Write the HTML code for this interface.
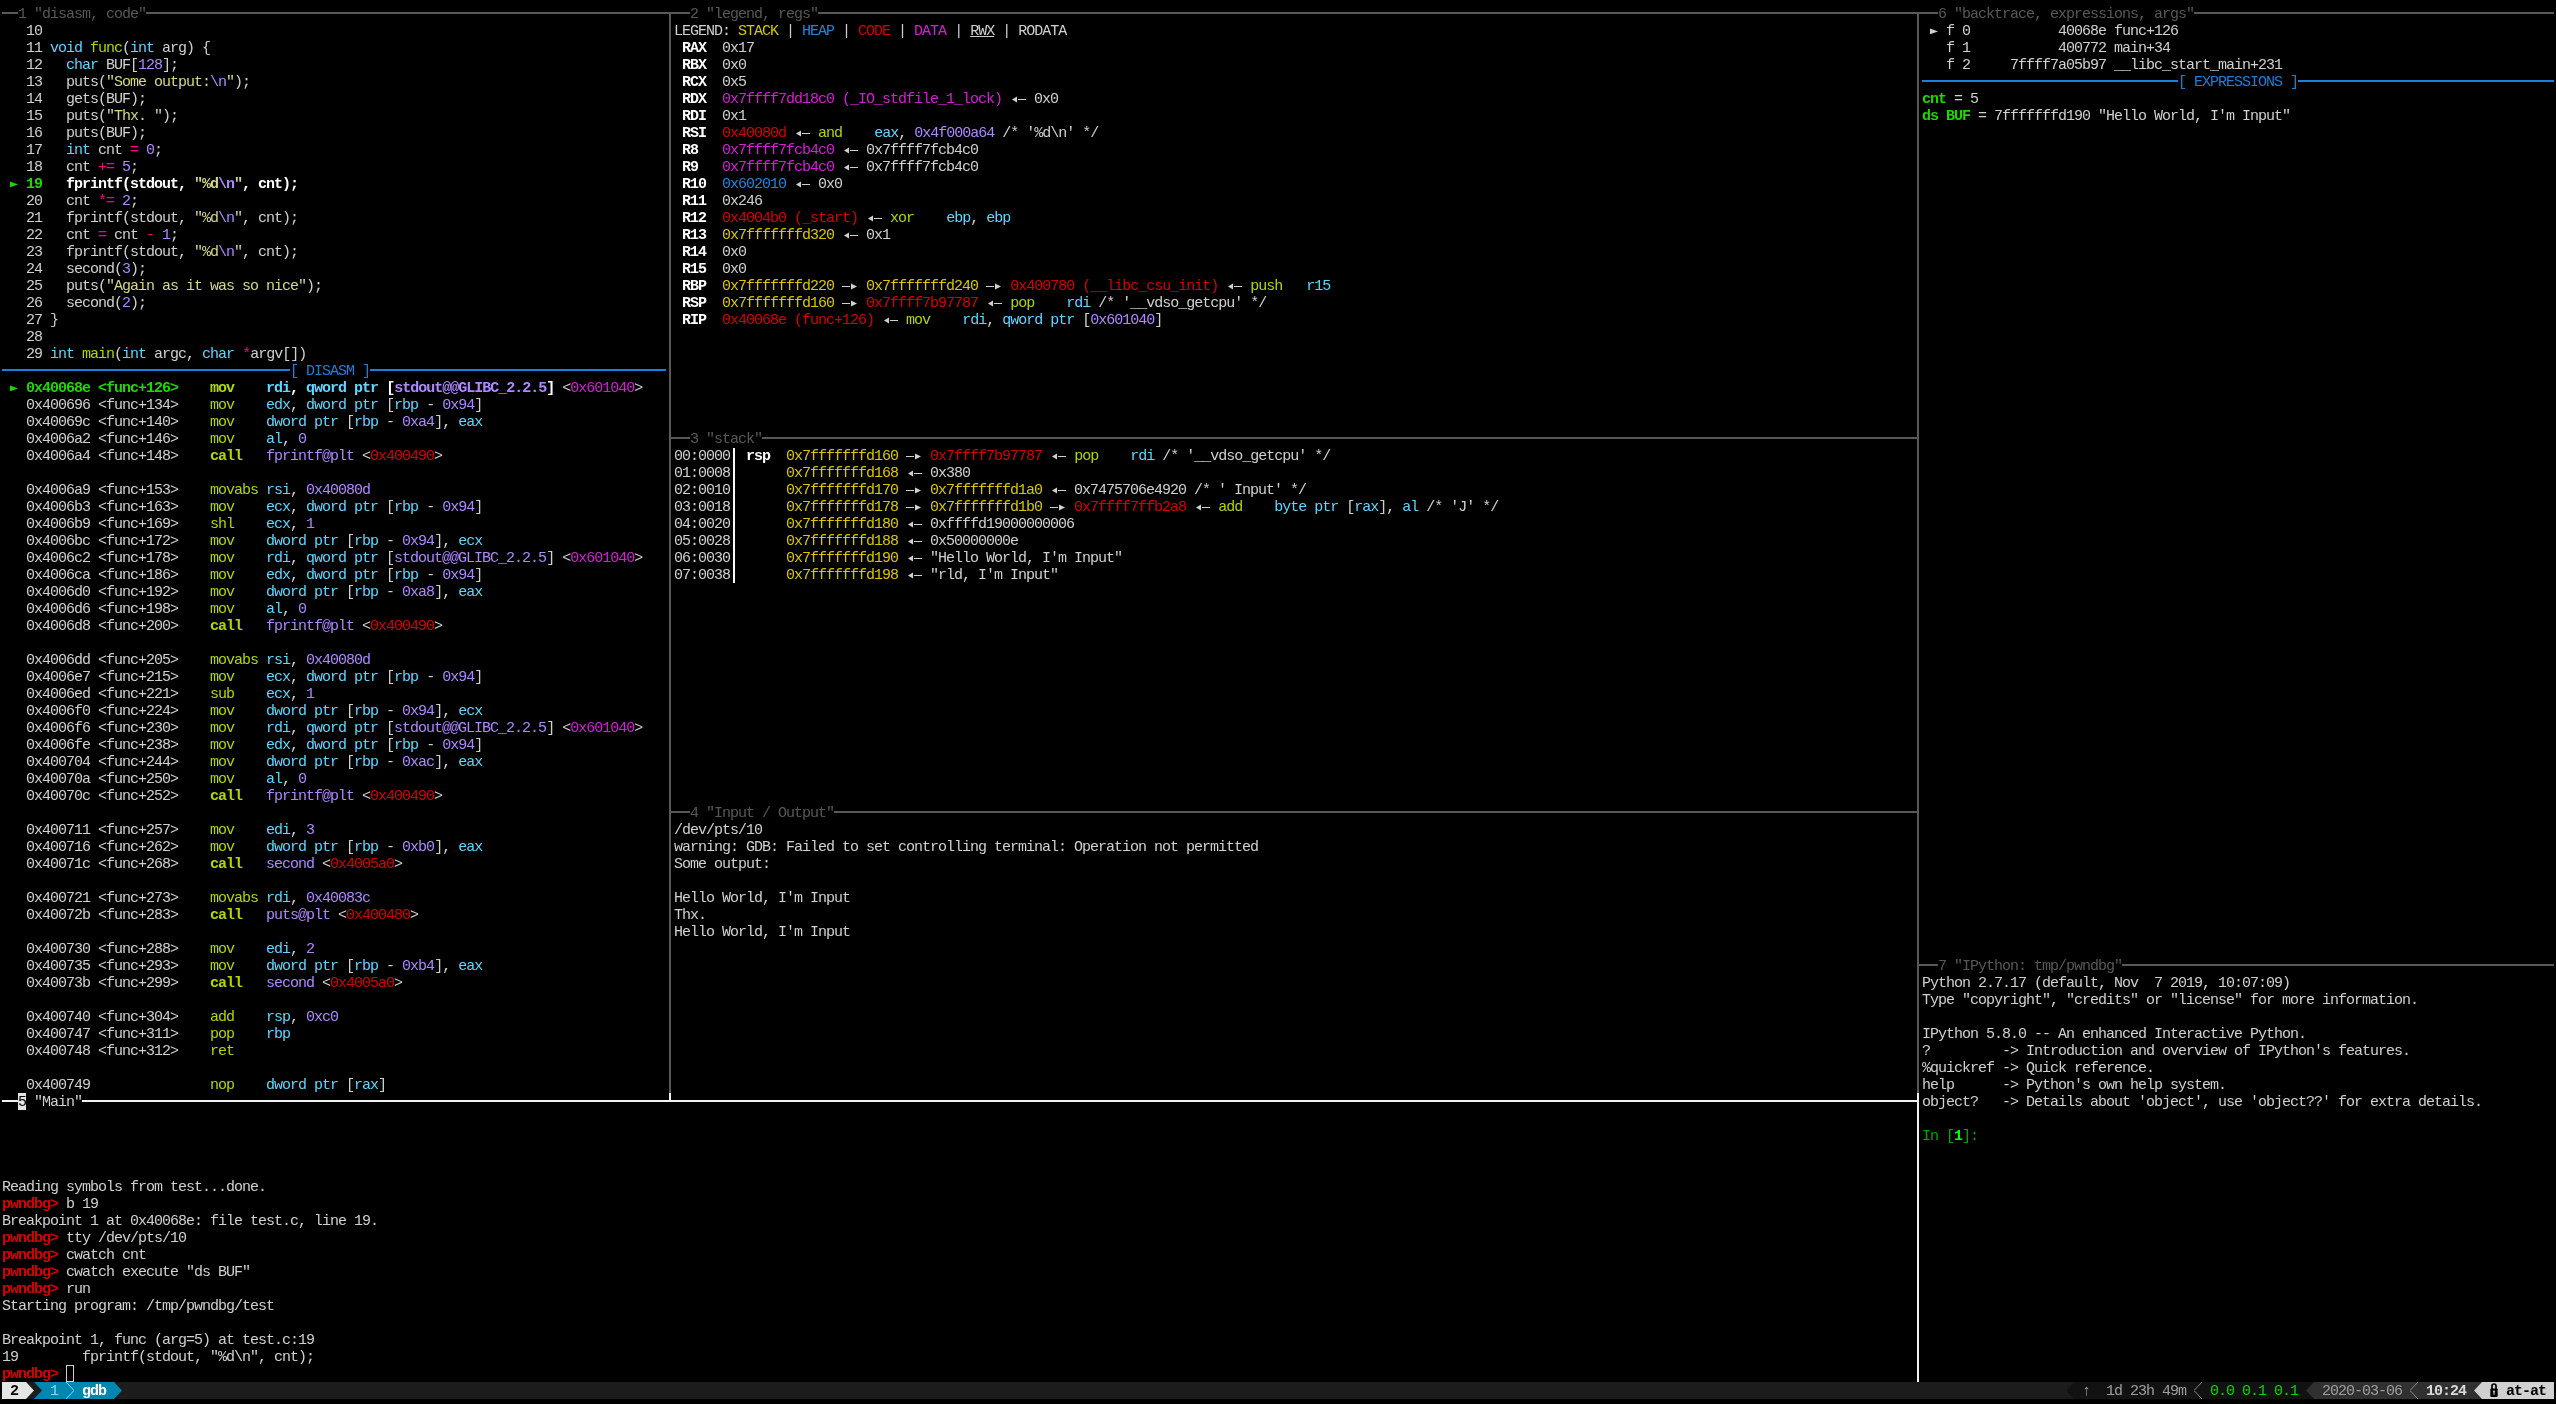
<!DOCTYPE html><html><head><meta charset="utf-8"><style>

html,body{margin:0;padding:0;background:#000;}
body{width:2556px;height:1404px;position:relative;overflow:hidden;}
#scr{position:absolute;left:0;top:0;width:2556px;height:1404px;will-change:transform;}
.r{position:absolute;white-space:pre;font-family:"Liberation Mono",monospace;font-size:15px;line-height:17px;height:17px;letter-spacing:-1.00146px;color:#d0d0d0;}
.ln{position:absolute;box-sizing:content-box;}
.ic{vertical-align:top;display:inline-block;}
.b{font-weight:bold;}
.d{color:#d0d0d0}
.W{color:#ffffff}
.G{color:#1fd600}
.gr{color:#585858}
.cy{color:#5fd7ff}
.yg{color:#afd700}
.pu{color:#af87ff}
.yl{color:#d7d787}
.pk{color:#ff0087}
.mg{color:#d71ed7}
.rd{color:#d70000}
.st{color:#d7c800}
.hp{color:#1f87df}
.bl{color:#1c7fd9}
.ipg{color:#00a800}
.ipG{color:#00ff00}
.prompt{color:#d70000}
.u{text-decoration:underline;}
.bgk{background:#000;}
.inv{background:#e4e4e4;color:#000;}
.k{color:#000}
.sb1{color:#87d7ff}
.sbg{color:#9e9e9e}
.lg{color:#00d700}
.tm{color:#dadada}

</style></head><body><div id="scr">
<div class="ln" style="left:2px;top:12px;width:2552px;height:2px;background:#585858"></div>
<div class="ln" style="left:669px;top:12px;width:2px;height:1081px;background:#585858"></div>
<div class="ln" style="left:669px;top:1093px;width:2px;height:9px;background:#f2f2f2"></div>
<div class="ln" style="left:1917px;top:12px;width:2px;height:1081px;background:#585858"></div>
<div class="ln" style="left:1917px;top:1093px;width:2px;height:289px;background:#f2f2f2"></div>
<div class="ln" style="left:669px;top:437px;width:1250px;height:2px;background:#585858"></div>
<div class="ln" style="left:669px;top:811px;width:1250px;height:2px;background:#585858"></div>
<div class="ln" style="left:1917px;top:964px;width:637px;height:2px;background:#585858"></div>
<div class="ln" style="left:2px;top:1100px;width:1917px;height:2px;background:#f2f2f2"></div>
<div class="ln" style="left:18px;top:1093px;width:8px;height:17px;background:#e4e4e4"></div>
<div class="ln" style="left:26px;top:1093px;width:56px;height:17px;background:#000"></div>
<div class="ln" style="left:2px;top:369px;width:664px;height:2px;background:#1c7fd9"></div>
<div class="ln" style="left:1922px;top:80px;width:632px;height:2px;background:#1c7fd9"></div>
<div class="ln" style="left:733px;top:447px;width:2px;height:136px;background:#ffffff"></div>
<div class="ln" style="left:66px;top:1365px;width:6px;height:15px;border:1px solid #d0d0d0"></div>
<div class="ln" style="left:2px;top:1382px;width:2552px;height:17px;background:#1c1c1c"></div>
<div class="ln" style="left:2px;top:1382px;width:24px;height:17px;background:#e4e4e4"></div>
<svg class="ln" style="left:26px;top:1382px" width="8" height="17"><polygon points="0,0 8,8.5 0,17" fill="#e4e4e4"/></svg>
<div class="ln" style="left:34px;top:1382px;width:80px;height:17px;background:#0087af"></div>
<svg class="ln" style="left:34px;top:1382px" width="8" height="17"><polygon points="0,0 8,8.5 0,17" fill="#1c1c1c"/></svg>
<svg class="ln" style="left:66px;top:1382px" width="8" height="17"><polyline points="0,0 8,8.5 0,17" fill="none" stroke="#87d7ff" stroke-width="1"/></svg>
<svg class="ln" style="left:114px;top:1382px" width="8" height="17"><polygon points="0,0 8,8.5 0,17" fill="#0087af"/></svg>
<div class="ln" style="left:2074px;top:1382px;width:240px;height:17px;background:#121212"></div>
<svg class="ln" style="left:2066px;top:1382px" width="8" height="17"><polygon points="8,0 0,8.5 8,17" fill="#121212"/></svg>
<div class="ln" style="left:2314px;top:1382px;width:168px;height:17px;background:#303030"></div>
<svg class="ln" style="left:2306px;top:1382px" width="8" height="17"><polygon points="8,0 0,8.5 8,17" fill="#303030"/></svg>
<div class="ln" style="left:2482px;top:1382px;width:72px;height:17px;background:#d0d0d0"></div>
<svg class="ln" style="left:2474px;top:1382px" width="8" height="17"><polygon points="8,0 0,8.5 8,17" fill="#d0d0d0"/></svg>
<svg class="ln" style="left:2194px;top:1382px" width="8" height="17"><polyline points="8,0 0,8.5 8,17" fill="none" stroke="#8a8a8a" stroke-width="1"/></svg>
<svg class="ln" style="left:2410px;top:1382px" width="8" height="17"><polyline points="8,0 0,8.5 8,17" fill="none" stroke="#8a8a8a" stroke-width="1"/></svg>
<svg class="ln" style="left:2490px;top:1382px" width="8" height="17"><path d="M2 7.5V4A2 2 0 0 1 6 4V7.5" fill="none" stroke="#000" stroke-width="1.7"/><rect x="0.3" y="6.5" width="7.4" height="8.5" rx="1" fill="#000"/><circle cx="4" cy="9.6" r="1" fill="#d0d0d0"/><rect x="3.5" y="9.6" width="1" height="3.2" fill="#d0d0d0"/></svg>
<div class="r" style="top:23px;left:2px">   10</div>
<div class="r" style="top:40px;left:2px">   11 <span class="cy">void</span> <span class="yg">func</span>(<span class="cy">int</span> arg) {</div>
<div class="r" style="top:57px;left:2px">   12   <span class="cy">char</span> BUF[<span class="pu">128</span>];</div>
<div class="r" style="top:74px;left:2px">   13   puts(<span class="yl">&quot;Some output:</span><span class="pu">\n</span><span class="yl">&quot;</span>);</div>
<div class="r" style="top:91px;left:2px">   14   gets(BUF);</div>
<div class="r" style="top:108px;left:2px">   15   puts(<span class="yl">&quot;Thx. &quot;</span>);</div>
<div class="r" style="top:125px;left:2px">   16   puts(BUF);</div>
<div class="r" style="top:142px;left:2px">   17   <span class="cy">int</span> cnt <span class="pk">=</span> <span class="pu">0</span>;</div>
<div class="r" style="top:159px;left:2px">   18   cnt <span class="pk">+=</span> <span class="pu">5</span>;</div>
<div class="r" style="top:176px;left:2px"> <span class="G b"><svg class="ic" width="8" height="17" viewBox="0 0 8 17"><path d="M0 5.6L8 8.4L0 11.2Z" fill="#1fd600"/></svg> 19</span>   <span class="W b">fprintf(stdout, </span><span class="yl b">&quot;%d</span><span class="pu b">\n</span><span class="yl b">&quot;</span><span class="W b">, cnt);</span></div>
<div class="r" style="top:193px;left:2px">   20   cnt <span class="pk">*=</span> <span class="pu">2</span>;</div>
<div class="r" style="top:210px;left:2px">   21   fprintf(stdout, <span class="yl">&quot;%d</span><span class="pu">\n</span><span class="yl">&quot;</span>, cnt);</div>
<div class="r" style="top:227px;left:2px">   22   cnt <span class="pk">=</span> cnt <span class="pk">-</span> <span class="pu">1</span>;</div>
<div class="r" style="top:244px;left:2px">   23   fprintf(stdout, <span class="yl">&quot;%d</span><span class="pu">\n</span><span class="yl">&quot;</span>, cnt);</div>
<div class="r" style="top:261px;left:2px">   24   second(<span class="pu">3</span>);</div>
<div class="r" style="top:278px;left:2px">   25   puts(<span class="yl">&quot;Again as it was so nice&quot;</span>);</div>
<div class="r" style="top:295px;left:2px">   26   second(<span class="pu">2</span>);</div>
<div class="r" style="top:312px;left:2px">   27 }</div>
<div class="r" style="top:329px;left:2px">   28</div>
<div class="r" style="top:346px;left:2px">   29 <span class="cy">int</span> <span class="yg">main</span>(<span class="cy">int</span> argc, <span class="cy">char</span> <span class="pk">*</span>argv[])</div>
<div class="r" style="top:380px;left:2px"> <span class="G b"><svg class="ic" width="8" height="17" viewBox="0 0 8 17"><path d="M0 5.6L8 8.4L0 11.2Z" fill="#1fd600"/></svg> 0x40068e &lt;func+126&gt;</span>    <span class="yg b">mov</span>    <span class="cy b">rdi</span><span class="W b">, </span><span class="cy b">qword ptr</span><span class="W b"> [</span><span class="pu b">stdout@@GLIBC_2.2.5</span><span class="W b">]</span> &lt;<span class="mg">0x601040</span>&gt;</div>
<div class="r" style="top:397px;left:2px">   0x400696 &lt;func+134&gt;    <span class="yg">mov</span>    <span class="cy">edx</span>, <span class="cy">dword ptr</span> [<span class="cy">rbp</span> - <span class="pu">0x94</span>]</div>
<div class="r" style="top:414px;left:2px">   0x40069c &lt;func+140&gt;    <span class="yg">mov</span>    <span class="cy">dword ptr</span> [<span class="cy">rbp</span> - <span class="pu">0xa4</span>], <span class="cy">eax</span></div>
<div class="r" style="top:431px;left:2px">   0x4006a2 &lt;func+146&gt;    <span class="yg">mov</span>    <span class="cy">al</span>, <span class="pu">0</span></div>
<div class="r" style="top:448px;left:2px">   0x4006a4 &lt;func+148&gt;    <span class="yg b">call</span>   <span class="pu">fprintf@plt</span> &lt;<span class="rd">0x400490</span>&gt;</div>
<div class="r" style="top:482px;left:2px">   0x4006a9 &lt;func+153&gt;    <span class="yg">movabs</span> <span class="cy">rsi</span>, <span class="pu">0x40080d</span></div>
<div class="r" style="top:499px;left:2px">   0x4006b3 &lt;func+163&gt;    <span class="yg">mov</span>    <span class="cy">ecx</span>, <span class="cy">dword ptr</span> [<span class="cy">rbp</span> - <span class="pu">0x94</span>]</div>
<div class="r" style="top:516px;left:2px">   0x4006b9 &lt;func+169&gt;    <span class="yg">shl</span>    <span class="cy">ecx</span>, <span class="pu">1</span></div>
<div class="r" style="top:533px;left:2px">   0x4006bc &lt;func+172&gt;    <span class="yg">mov</span>    <span class="cy">dword ptr</span> [<span class="cy">rbp</span> - <span class="pu">0x94</span>], <span class="cy">ecx</span></div>
<div class="r" style="top:550px;left:2px">   0x4006c2 &lt;func+178&gt;    <span class="yg">mov</span>    <span class="cy">rdi</span>, <span class="cy">qword ptr</span> [<span class="pu">stdout@@GLIBC_2.2.5</span>] &lt;<span class="mg">0x601040</span>&gt;</div>
<div class="r" style="top:567px;left:2px">   0x4006ca &lt;func+186&gt;    <span class="yg">mov</span>    <span class="cy">edx</span>, <span class="cy">dword ptr</span> [<span class="cy">rbp</span> - <span class="pu">0x94</span>]</div>
<div class="r" style="top:584px;left:2px">   0x4006d0 &lt;func+192&gt;    <span class="yg">mov</span>    <span class="cy">dword ptr</span> [<span class="cy">rbp</span> - <span class="pu">0xa8</span>], <span class="cy">eax</span></div>
<div class="r" style="top:601px;left:2px">   0x4006d6 &lt;func+198&gt;    <span class="yg">mov</span>    <span class="cy">al</span>, <span class="pu">0</span></div>
<div class="r" style="top:618px;left:2px">   0x4006d8 &lt;func+200&gt;    <span class="yg b">call</span>   <span class="pu">fprintf@plt</span> &lt;<span class="rd">0x400490</span>&gt;</div>
<div class="r" style="top:652px;left:2px">   0x4006dd &lt;func+205&gt;    <span class="yg">movabs</span> <span class="cy">rsi</span>, <span class="pu">0x40080d</span></div>
<div class="r" style="top:669px;left:2px">   0x4006e7 &lt;func+215&gt;    <span class="yg">mov</span>    <span class="cy">ecx</span>, <span class="cy">dword ptr</span> [<span class="cy">rbp</span> - <span class="pu">0x94</span>]</div>
<div class="r" style="top:686px;left:2px">   0x4006ed &lt;func+221&gt;    <span class="yg">sub</span>    <span class="cy">ecx</span>, <span class="pu">1</span></div>
<div class="r" style="top:703px;left:2px">   0x4006f0 &lt;func+224&gt;    <span class="yg">mov</span>    <span class="cy">dword ptr</span> [<span class="cy">rbp</span> - <span class="pu">0x94</span>], <span class="cy">ecx</span></div>
<div class="r" style="top:720px;left:2px">   0x4006f6 &lt;func+230&gt;    <span class="yg">mov</span>    <span class="cy">rdi</span>, <span class="cy">qword ptr</span> [<span class="pu">stdout@@GLIBC_2.2.5</span>] &lt;<span class="mg">0x601040</span>&gt;</div>
<div class="r" style="top:737px;left:2px">   0x4006fe &lt;func+238&gt;    <span class="yg">mov</span>    <span class="cy">edx</span>, <span class="cy">dword ptr</span> [<span class="cy">rbp</span> - <span class="pu">0x94</span>]</div>
<div class="r" style="top:754px;left:2px">   0x400704 &lt;func+244&gt;    <span class="yg">mov</span>    <span class="cy">dword ptr</span> [<span class="cy">rbp</span> - <span class="pu">0xac</span>], <span class="cy">eax</span></div>
<div class="r" style="top:771px;left:2px">   0x40070a &lt;func+250&gt;    <span class="yg">mov</span>    <span class="cy">al</span>, <span class="pu">0</span></div>
<div class="r" style="top:788px;left:2px">   0x40070c &lt;func+252&gt;    <span class="yg b">call</span>   <span class="pu">fprintf@plt</span> &lt;<span class="rd">0x400490</span>&gt;</div>
<div class="r" style="top:822px;left:2px">   0x400711 &lt;func+257&gt;    <span class="yg">mov</span>    <span class="cy">edi</span>, <span class="pu">3</span></div>
<div class="r" style="top:839px;left:2px">   0x400716 &lt;func+262&gt;    <span class="yg">mov</span>    <span class="cy">dword ptr</span> [<span class="cy">rbp</span> - <span class="pu">0xb0</span>], <span class="cy">eax</span></div>
<div class="r" style="top:856px;left:2px">   0x40071c &lt;func+268&gt;    <span class="yg b">call</span>   <span class="pu">second</span> &lt;<span class="rd">0x4005a0</span>&gt;</div>
<div class="r" style="top:890px;left:2px">   0x400721 &lt;func+273&gt;    <span class="yg">movabs</span> <span class="cy">rdi</span>, <span class="pu">0x40083c</span></div>
<div class="r" style="top:907px;left:2px">   0x40072b &lt;func+283&gt;    <span class="yg b">call</span>   <span class="pu">puts@plt</span> &lt;<span class="rd">0x400480</span>&gt;</div>
<div class="r" style="top:941px;left:2px">   0x400730 &lt;func+288&gt;    <span class="yg">mov</span>    <span class="cy">edi</span>, <span class="pu">2</span></div>
<div class="r" style="top:958px;left:2px">   0x400735 &lt;func+293&gt;    <span class="yg">mov</span>    <span class="cy">dword ptr</span> [<span class="cy">rbp</span> - <span class="pu">0xb4</span>], <span class="cy">eax</span></div>
<div class="r" style="top:975px;left:2px">   0x40073b &lt;func+299&gt;    <span class="yg b">call</span>   <span class="pu">second</span> &lt;<span class="rd">0x4005a0</span>&gt;</div>
<div class="r" style="top:1009px;left:2px">   0x400740 &lt;func+304&gt;    <span class="yg">add</span>    <span class="cy">rsp</span>, <span class="pu">0xc0</span></div>
<div class="r" style="top:1026px;left:2px">   0x400747 &lt;func+311&gt;    <span class="yg">pop</span>    <span class="cy">rbp</span></div>
<div class="r" style="top:1043px;left:2px">   0x400748 &lt;func+312&gt;    <span class="yg">ret</span></div>
<div class="r" style="top:1077px;left:2px">   0x400749               <span class="yg">nop</span>    <span class="cy">dword ptr</span> [<span class="cy">rax</span>]</div>
<div class="r" style="top:23px;left:674px">LEGEND: <span class="st">STACK</span> | <span class="hp">HEAP</span> | <span class="rd">CODE</span> | <span class="mg">DATA</span> | <span class="u">RWX</span> | RODATA</div>
<div class="r" style="top:40px;left:674px"> <span class="W b">RAX</span>  0x17</div>
<div class="r" style="top:57px;left:674px"> <span class="W b">RBX</span>  0x0</div>
<div class="r" style="top:74px;left:674px"> <span class="W b">RCX</span>  0x5</div>
<div class="r" style="top:91px;left:674px"> <span class="W b">RDX</span>  <span class="mg">0x7ffff7dd18c0 (_IO_stdfile_1_lock)</span> <svg class="ic" width="16" height="17" viewBox="0 0 16 17"><path d="M2 8.5L7 5.5V11.5Z" fill="#d0d0d0"/><rect x="8" y="8" width="8" height="1" fill="#d0d0d0"/></svg> 0x0</div>
<div class="r" style="top:108px;left:674px"> <span class="W b">RDI</span>  0x1</div>
<div class="r" style="top:125px;left:674px"> <span class="W b">RSI</span>  <span class="rd">0x40080d</span> <svg class="ic" width="16" height="17" viewBox="0 0 16 17"><path d="M2 8.5L7 5.5V11.5Z" fill="#d0d0d0"/><rect x="8" y="8" width="8" height="1" fill="#d0d0d0"/></svg> <span class="yg">and</span>    <span class="cy">eax</span>, <span class="pu">0x4f000a64</span> /* &#x27;%d\n&#x27; */</div>
<div class="r" style="top:142px;left:674px"> <span class="W b">R8 </span>  <span class="mg">0x7ffff7fcb4c0</span> <svg class="ic" width="16" height="17" viewBox="0 0 16 17"><path d="M2 8.5L7 5.5V11.5Z" fill="#d0d0d0"/><rect x="8" y="8" width="8" height="1" fill="#d0d0d0"/></svg> 0x7ffff7fcb4c0</div>
<div class="r" style="top:159px;left:674px"> <span class="W b">R9 </span>  <span class="mg">0x7ffff7fcb4c0</span> <svg class="ic" width="16" height="17" viewBox="0 0 16 17"><path d="M2 8.5L7 5.5V11.5Z" fill="#d0d0d0"/><rect x="8" y="8" width="8" height="1" fill="#d0d0d0"/></svg> 0x7ffff7fcb4c0</div>
<div class="r" style="top:176px;left:674px"> <span class="W b">R10</span>  <span class="hp">0x602010</span> <svg class="ic" width="16" height="17" viewBox="0 0 16 17"><path d="M2 8.5L7 5.5V11.5Z" fill="#d0d0d0"/><rect x="8" y="8" width="8" height="1" fill="#d0d0d0"/></svg> 0x0</div>
<div class="r" style="top:193px;left:674px"> <span class="W b">R11</span>  0x246</div>
<div class="r" style="top:210px;left:674px"> <span class="W b">R12</span>  <span class="rd">0x4004b0 (_start)</span> <svg class="ic" width="16" height="17" viewBox="0 0 16 17"><path d="M2 8.5L7 5.5V11.5Z" fill="#d0d0d0"/><rect x="8" y="8" width="8" height="1" fill="#d0d0d0"/></svg> <span class="yg">xor</span>    <span class="cy">ebp</span>, <span class="cy">ebp</span></div>
<div class="r" style="top:227px;left:674px"> <span class="W b">R13</span>  <span class="st">0x7fffffffd320</span> <svg class="ic" width="16" height="17" viewBox="0 0 16 17"><path d="M2 8.5L7 5.5V11.5Z" fill="#d0d0d0"/><rect x="8" y="8" width="8" height="1" fill="#d0d0d0"/></svg> 0x1</div>
<div class="r" style="top:244px;left:674px"> <span class="W b">R14</span>  0x0</div>
<div class="r" style="top:261px;left:674px"> <span class="W b">R15</span>  0x0</div>
<div class="r" style="top:278px;left:674px"> <span class="W b">RBP</span>  <span class="st">0x7fffffffd220</span> <svg class="ic" width="16" height="17" viewBox="0 0 16 17"><rect x="0" y="8" width="8" height="1" fill="#d0d0d0"/><path d="M9 5.5L15 8.5L9 11.5Z" fill="#d0d0d0"/></svg> <span class="st">0x7fffffffd240</span> <svg class="ic" width="16" height="17" viewBox="0 0 16 17"><rect x="0" y="8" width="8" height="1" fill="#d0d0d0"/><path d="M9 5.5L15 8.5L9 11.5Z" fill="#d0d0d0"/></svg> <span class="rd">0x400780 (__libc_csu_init)</span> <svg class="ic" width="16" height="17" viewBox="0 0 16 17"><path d="M2 8.5L7 5.5V11.5Z" fill="#d0d0d0"/><rect x="8" y="8" width="8" height="1" fill="#d0d0d0"/></svg> <span class="yg">push</span>   <span class="cy">r15</span></div>
<div class="r" style="top:295px;left:674px"> <span class="W b">RSP</span>  <span class="st">0x7fffffffd160</span> <svg class="ic" width="16" height="17" viewBox="0 0 16 17"><rect x="0" y="8" width="8" height="1" fill="#d0d0d0"/><path d="M9 5.5L15 8.5L9 11.5Z" fill="#d0d0d0"/></svg> <span class="rd">0x7ffff7b97787</span> <svg class="ic" width="16" height="17" viewBox="0 0 16 17"><path d="M2 8.5L7 5.5V11.5Z" fill="#d0d0d0"/><rect x="8" y="8" width="8" height="1" fill="#d0d0d0"/></svg> <span class="yg">pop</span>    <span class="cy">rdi</span> /* &#x27;__vdso_getcpu&#x27; */</div>
<div class="r" style="top:312px;left:674px"> <span class="W b">RIP</span>  <span class="rd">0x40068e (func+126)</span> <svg class="ic" width="16" height="17" viewBox="0 0 16 17"><path d="M2 8.5L7 5.5V11.5Z" fill="#d0d0d0"/><rect x="8" y="8" width="8" height="1" fill="#d0d0d0"/></svg> <span class="yg">mov</span>    <span class="cy">rdi</span>, <span class="cy">qword ptr</span> [<span class="pu">0x601040</span>]</div>
<div class="r" style="top:448px;left:674px">00:0000  <span class="W b">rsp</span>  <span class="st">0x7fffffffd160</span> <svg class="ic" width="16" height="17" viewBox="0 0 16 17"><rect x="0" y="8" width="8" height="1" fill="#d0d0d0"/><path d="M9 5.5L15 8.5L9 11.5Z" fill="#d0d0d0"/></svg> <span class="rd">0x7ffff7b97787</span> <svg class="ic" width="16" height="17" viewBox="0 0 16 17"><path d="M2 8.5L7 5.5V11.5Z" fill="#d0d0d0"/><rect x="8" y="8" width="8" height="1" fill="#d0d0d0"/></svg> <span class="yg">pop</span>    <span class="cy">rdi</span> /* &#x27;__vdso_getcpu&#x27; */</div>
<div class="r" style="top:465px;left:674px">01:0008       <span class="st">0x7fffffffd168</span> <svg class="ic" width="16" height="17" viewBox="0 0 16 17"><path d="M2 8.5L7 5.5V11.5Z" fill="#d0d0d0"/><rect x="8" y="8" width="8" height="1" fill="#d0d0d0"/></svg> 0x380</div>
<div class="r" style="top:482px;left:674px">02:0010       <span class="st">0x7fffffffd170</span> <svg class="ic" width="16" height="17" viewBox="0 0 16 17"><rect x="0" y="8" width="8" height="1" fill="#d0d0d0"/><path d="M9 5.5L15 8.5L9 11.5Z" fill="#d0d0d0"/></svg> <span class="st">0x7fffffffd1a0</span> <svg class="ic" width="16" height="17" viewBox="0 0 16 17"><path d="M2 8.5L7 5.5V11.5Z" fill="#d0d0d0"/><rect x="8" y="8" width="8" height="1" fill="#d0d0d0"/></svg> 0x7475706e4920 /* &#x27; Input&#x27; */</div>
<div class="r" style="top:499px;left:674px">03:0018       <span class="st">0x7fffffffd178</span> <svg class="ic" width="16" height="17" viewBox="0 0 16 17"><rect x="0" y="8" width="8" height="1" fill="#d0d0d0"/><path d="M9 5.5L15 8.5L9 11.5Z" fill="#d0d0d0"/></svg> <span class="st">0x7fffffffd1b0</span> <svg class="ic" width="16" height="17" viewBox="0 0 16 17"><rect x="0" y="8" width="8" height="1" fill="#d0d0d0"/><path d="M9 5.5L15 8.5L9 11.5Z" fill="#d0d0d0"/></svg> <span class="rd">0x7ffff7ffb2a8</span> <svg class="ic" width="16" height="17" viewBox="0 0 16 17"><path d="M2 8.5L7 5.5V11.5Z" fill="#d0d0d0"/><rect x="8" y="8" width="8" height="1" fill="#d0d0d0"/></svg> <span class="yg">add</span>    <span class="cy">byte ptr</span> [<span class="cy">rax</span>], <span class="cy">al</span> /* &#x27;J&#x27; */</div>
<div class="r" style="top:516px;left:674px">04:0020       <span class="st">0x7fffffffd180</span> <svg class="ic" width="16" height="17" viewBox="0 0 16 17"><path d="M2 8.5L7 5.5V11.5Z" fill="#d0d0d0"/><rect x="8" y="8" width="8" height="1" fill="#d0d0d0"/></svg> 0xffffd19000000006</div>
<div class="r" style="top:533px;left:674px">05:0028       <span class="st">0x7fffffffd188</span> <svg class="ic" width="16" height="17" viewBox="0 0 16 17"><path d="M2 8.5L7 5.5V11.5Z" fill="#d0d0d0"/><rect x="8" y="8" width="8" height="1" fill="#d0d0d0"/></svg> 0x50000000e</div>
<div class="r" style="top:550px;left:674px">06:0030       <span class="st">0x7fffffffd190</span> <svg class="ic" width="16" height="17" viewBox="0 0 16 17"><path d="M2 8.5L7 5.5V11.5Z" fill="#d0d0d0"/><rect x="8" y="8" width="8" height="1" fill="#d0d0d0"/></svg> &quot;Hello World, I&#x27;m Input&quot;</div>
<div class="r" style="top:567px;left:674px">07:0038       <span class="st">0x7fffffffd198</span> <svg class="ic" width="16" height="17" viewBox="0 0 16 17"><path d="M2 8.5L7 5.5V11.5Z" fill="#d0d0d0"/><rect x="8" y="8" width="8" height="1" fill="#d0d0d0"/></svg> &quot;rld, I&#x27;m Input&quot;</div>
<div class="r" style="top:822px;left:674px">/dev/pts/10</div>
<div class="r" style="top:839px;left:674px">warning: GDB: Failed to set controlling terminal: Operation not permitted</div>
<div class="r" style="top:856px;left:674px">Some output:</div>
<div class="r" style="top:890px;left:674px">Hello World, I&#x27;m Input</div>
<div class="r" style="top:907px;left:674px">Thx.</div>
<div class="r" style="top:924px;left:674px">Hello World, I&#x27;m Input</div>
<div class="r" style="top:23px;left:1922px"> <svg class="ic" width="8" height="17" viewBox="0 0 8 17"><path d="M0 5.6L8 8.4L0 11.2Z" fill="#d0d0d0"/></svg> f 0           40068e func+126</div>
<div class="r" style="top:40px;left:1922px">   f 1           400772 main+34</div>
<div class="r" style="top:57px;left:1922px">   f 2     7ffff7a05b97 __libc_start_main+231</div>
<div class="r" style="top:91px;left:1922px"><span class="G b">cnt</span> = 5</div>
<div class="r" style="top:108px;left:1922px"><span class="G b">ds BUF</span> = 7fffffffd190 &quot;Hello World, I&#x27;m Input&quot;</div>
<div class="r" style="top:975px;left:1922px">Python 2.7.17 (default, Nov  7 2019, 10:07:09)</div>
<div class="r" style="top:992px;left:1922px">Type &quot;copyright&quot;, &quot;credits&quot; or &quot;license&quot; for more information.</div>
<div class="r" style="top:1026px;left:1922px">IPython 5.8.0 -- An enhanced Interactive Python.</div>
<div class="r" style="top:1043px;left:1922px">?         -&gt; Introduction and overview of IPython&#x27;s features.</div>
<div class="r" style="top:1060px;left:1922px">%quickref -&gt; Quick reference.</div>
<div class="r" style="top:1077px;left:1922px">help      -&gt; Python&#x27;s own help system.</div>
<div class="r" style="top:1094px;left:1922px">object?   -&gt; Details about &#x27;object&#x27;, use &#x27;object??&#x27; for extra details.</div>
<div class="r" style="top:1128px;left:1922px"><span class="ipg">In [</span><span class="ipG b">1</span><span class="ipg">]:</span></div>
<div class="r" style="top:1179px;left:2px">Reading symbols from test...done.</div>
<div class="r" style="top:1196px;left:2px"><span class="prompt b">pwndbg&gt;</span> b 19</div>
<div class="r" style="top:1213px;left:2px">Breakpoint 1 at 0x40068e: file test.c, line 19.</div>
<div class="r" style="top:1230px;left:2px"><span class="prompt b">pwndbg&gt;</span> tty /dev/pts/10</div>
<div class="r" style="top:1247px;left:2px"><span class="prompt b">pwndbg&gt;</span> cwatch cnt</div>
<div class="r" style="top:1264px;left:2px"><span class="prompt b">pwndbg&gt;</span> cwatch execute &quot;ds BUF&quot;</div>
<div class="r" style="top:1281px;left:2px"><span class="prompt b">pwndbg&gt;</span> run</div>
<div class="r" style="top:1298px;left:2px">Starting program: /tmp/pwndbg/test</div>
<div class="r" style="top:1332px;left:2px">Breakpoint 1, func (arg=5) at test.c:19</div>
<div class="r" style="top:1349px;left:2px">19        fprintf(stdout, &quot;%d\n&quot;, cnt);</div>
<div class="r" style="top:1366px;left:2px"><span class="prompt b">pwndbg&gt;</span> </div>
<div class="r" style="top:6px;left:18px"><span class="gr bgk">1 &quot;disasm, code&quot;</span></div>
<div class="r" style="top:6px;left:690px"><span class="gr bgk">2 &quot;legend, regs&quot;</span></div>
<div class="r" style="top:6px;left:1938px"><span class="gr bgk">6 &quot;backtrace, expressions, args&quot;</span></div>
<div class="r" style="top:431px;left:690px"><span class="gr bgk">3 &quot;stack&quot;</span></div>
<div class="r" style="top:805px;left:690px"><span class="gr bgk">4 &quot;Input / Output&quot;</span></div>
<div class="r" style="top:958px;left:1938px"><span class="gr bgk">7 &quot;IPython: tmp/pwndbg&quot;</span></div>
<div class="r" style="top:1094px;left:18px"><span class="k">5</span><span class="d"> &quot;Main&quot;</span></div>
<div class="r" style="top:363px;left:290px"><span class="bl bgk">[ DISASM ]</span></div>
<div class="r" style="top:74px;left:2178px"><span class="bl bgk">[ EXPRESSIONS ]</span></div>
<div class="r" style="top:1383px;left:10px"><span class="k b">2</span></div>
<div class="r" style="top:1383px;left:50px"><span class="sb1">1</span></div>
<div class="r" style="top:1383px;left:82px"><span class="W b">gdb</span></div>
<div class="r" style="top:1383px;left:2082px"><span class="sbg">↑</span></div>
<div class="r" style="top:1383px;left:2106px"><span class="sbg">1d 23h 49m</span></div>
<div class="r" style="top:1383px;left:2210px"><span class="lg">0.0 0.1 0.1</span></div>
<div class="r" style="top:1383px;left:2322px"><span class="sbg">2020-03-06</span></div>
<div class="r" style="top:1383px;left:2426px"><span class="tm b">10:24</span></div>
<div class="r" style="top:1383px;left:2506px"><span class="k b">at-at</span></div>
</div></body></html>
